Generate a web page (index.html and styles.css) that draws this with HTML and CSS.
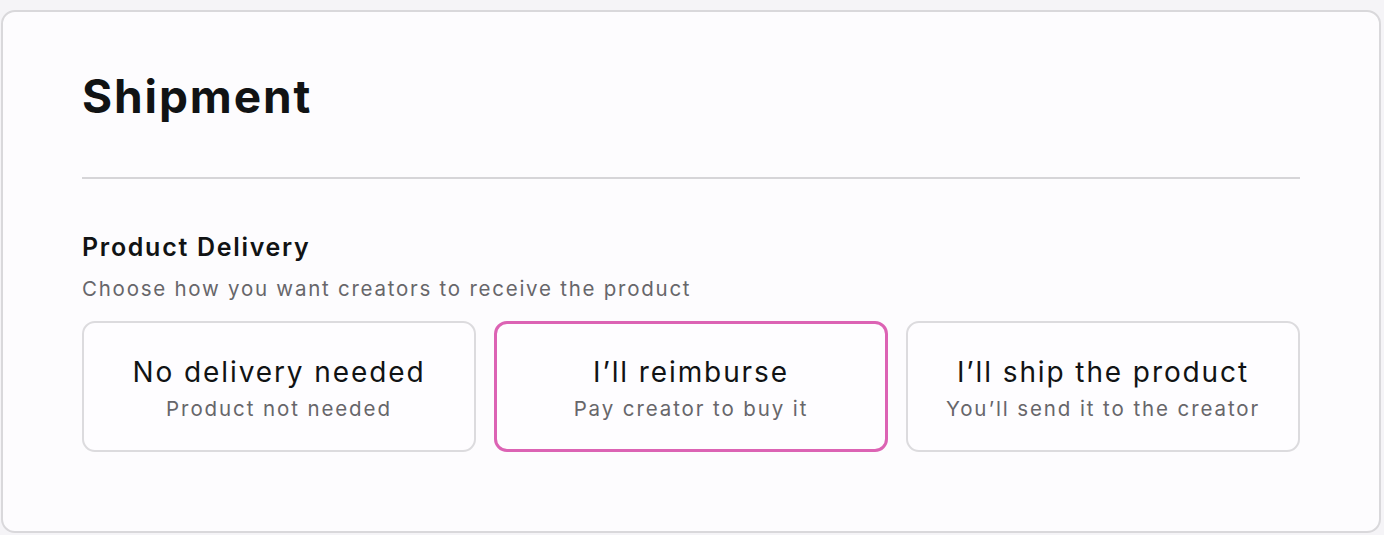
FILE: index.html
```html
<!DOCTYPE html>
<html lang="en">
<head>
<meta charset="utf-8">
<title>Shipment</title>
<link rel="stylesheet" href="styles.css">
</head>
<body>
<section class="card">
  <h1 class="title">Shipment</h1>
  <hr class="divider">
  <h2 class="section-title">Product Delivery</h2>
  <p class="section-desc">Choose how you want creators to receive the product</p>
  <div class="options">
    <button class="option">
      <span class="option-title">No delivery needed</span>
      <span class="option-sub">Product not needed</span>
    </button>
    <button class="option selected">
      <span class="option-title">I’ll reimburse</span>
      <span class="option-sub">Pay creator to buy it</span>
    </button>
    <button class="option">
      <span class="option-title">I’ll ship the product</span>
      <span class="option-sub">You’ll send it to the creator</span>
    </button>
  </div>
</section>
</body>
</html>
```

FILE: styles.css
```css
* { box-sizing: border-box; }
html, body { margin: 0; padding: 0; }
body {
  background: #f5f4f7;
  font-family: Inter, "Noto Sans", sans-serif;
  color: #111314;
  padding: 10px 3px 0 1px;
  height: 535px;
  overflow: hidden;
}
.card {
  background: #fdfcfe;
  border: 2px solid #d9d8db;
  border-radius: 14px;
  padding: 60px 79px 0 79px;
  height: 523px;
}
.title {
  margin: 0;
  font-size: 46px;
  font-weight: 700;
  line-height: 48px;
  letter-spacing: 1.9px;
}
.divider {
  border: 0;
  border-top: 2px solid #d6d5d8;
  margin: 57px 0 0 0;
}
.section-title {
  margin: 53px 0 0 0;
  font-size: 25px;
  font-weight: 600;
  line-height: 30px;
  letter-spacing: 1.7px;
}
.section-desc {
  margin: 14px 0 0 0;
  font-size: 20.5px;
  line-height: 26px;
  letter-spacing: 1.75px;
  color: #67666a;
}
.options {
  display: grid;
  grid-template-columns: repeat(3, 1fr);
  gap: 18px;
  margin-top: 19px;
}
.option {
  height: 131px;
  background: #fefdff;
  border: 2px solid #dcdbde;
  border-radius: 13px;
  display: flex;
  flex-direction: column;
  align-items: center;
  justify-content: center;
  font-family: inherit;
  padding: 4px 0 0 0;
}
.option.selected {
  border: 3px solid #dc63b4;
}
.option-title {
  font-size: 28px;
  line-height: 34px;
  letter-spacing: 1.9px;
  color: #111314;
}
.option-sub {
  margin-top: 7px;
  font-size: 20.5px;
  line-height: 26px;
  letter-spacing: 1.9px;
  color: #67666a;
}
```
